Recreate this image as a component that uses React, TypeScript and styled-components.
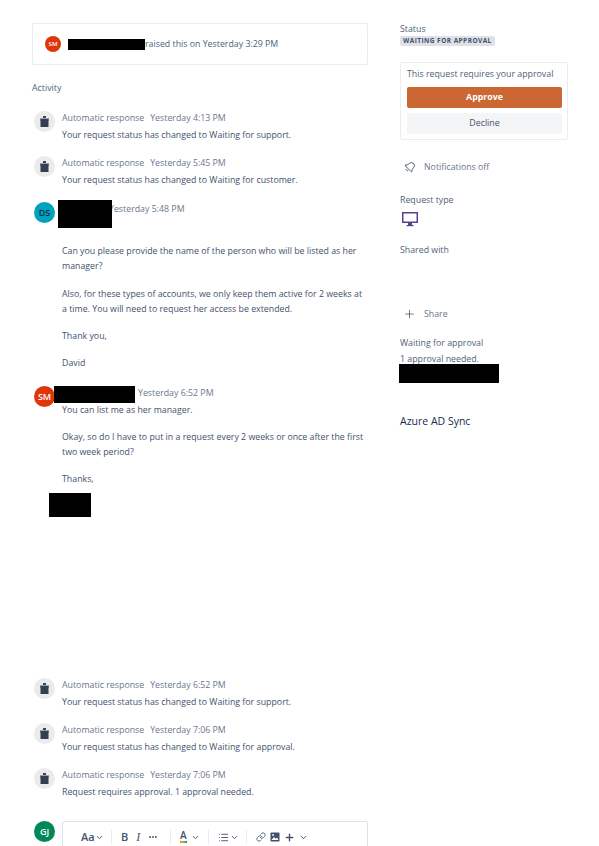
import { ReactNode } from "react";
import styled, { createGlobalStyle } from "styled-components";
import { Bell, ChevronDown, Ellipsis, Link, List, Plus } from "lucide-react";

const GlobalStyle = createGlobalStyle`
  html, body {
    margin: 0;
    padding: 0;
    height: 846px;
    overflow: hidden;
    background: #fff;
    font-family: "Open Sans", "Noto Sans", sans-serif;
    font-size: 8.8px;
    color: #42526e;
  }
`;

const Page = styled.div`
  display: grid;
  grid-template-columns: 336px 168px;
  column-gap: 32px;
  padding: 23px 0 0 32px;
  height: 823px;
  overflow: hidden;
`;

const Main = styled.main`
  display: flex;
  flex-direction: column;
`;

const RaisedCard = styled.div`
  position: relative;
  box-sizing: border-box;
  height: 42px;
  display: flex;
  align-items: center;
  border: 1px solid #ebecf0;
  border-radius: 2px;
  padding-left: 12px;
`;

const RaisedText = styled.span`
  margin-left: 84px;
  line-height: 12px;
  color: #505f79;
`;

const Redaction = styled.div<{ $x: number; $y: number; $w: number; $h: number }>`
  position: absolute;
  left: ${(p) => p.$x}px;
  top: ${(p) => p.$y}px;
  width: ${(p) => p.$w}px;
  height: ${(p) => p.$h}px;
  background: #000;
`;

const Avatar = styled.div<{ $size?: number; $bg: string; $fg?: string }>`
  flex: none;
  width: ${(p) => p.$size ?? 21}px;
  height: ${(p) => p.$size ?? 21}px;
  border-radius: 50%;
  background: ${(p) => p.$bg};
  color: ${(p) => p.$fg ?? "#fff"};
  display: flex;
  align-items: center;
  justify-content: center;
  font-size: ${(p) => ((p.$size ?? 21) < 20 ? 6 : 9)}px;
  font-weight: 600;
`;

const ActivityTitle = styled.h2`
  margin: 17px 0 0;
  font-size: 8.8px;
  line-height: 12px;
  font-weight: 400;
  color: #505f79;
`;

const Entry = styled.div<{ $top: number; $bottom?: number }>`
  position: relative;
  display: flex;
  gap: 7px;
  margin-top: ${(p) => p.$top}px;
  padding-left: 2px;
  padding-bottom: ${(p) => p.$bottom ?? 0}px;
`;

const EntryBody = styled.div`
  flex: 1;
  min-width: 0;
`;

const EntryHead = styled.div<{ $after?: number }>`
  display: flex;
  gap: 6px;
  line-height: 15px;
  color: #6b778c;
  margin-bottom: ${(p) => p.$after ?? 2}px;
`;

const DateText = styled.span<{ $indent?: number }>`
  margin-left: ${(p) => p.$indent ?? 0}px;
`;

const Paragraph = styled.p<{ $after?: number }>`
  margin: 0 0 ${(p) => p.$after ?? 12}px;
  line-height: 15px;
  color: #42526e;
`;

const Composer = styled.div`
  display: flex;
  gap: 7px;
  margin-top: 21px;
  padding-left: 2px;
`;

const EditorBox = styled.div`
  flex: 1;
  height: 60px;
  box-sizing: border-box;
  border: 1px solid #dfe1e6;
  border-radius: 2px;
`;

const Toolbar = styled.div`
  display: flex;
  align-items: center;
  height: 30px;
  padding-left: 18px;
  color: #42526e;
`;

const ToolGroup = styled.div<{ $width: number; $gap?: number }>`
  box-sizing: border-box;
  width: ${(p) => p.$width}px;
  display: flex;
  align-items: center;
  gap: ${(p) => p.$gap ?? 5}px;
  padding-left: 9px;
  height: 14px;
  border-left: 1px solid #ebecf0;
  &:first-child {
    border-left: 0;
    padding-left: 0;
  }
`;

const ToolGlyph = styled.span<{ $italic?: boolean }>`
  font-family: ${(p) => (p.$italic ? '"Liberation Serif", serif' : '"Open Sans", sans-serif')};
  font-size: ${(p) => (p.$italic ? 12 : 11)}px;
  font-weight: ${(p) => (p.$italic ? 400 : 600)};
  font-style: ${(p) => (p.$italic ? "italic" : "normal")};
  line-height: 12px;
`;

const ColorA = styled.span`
  display: inline-block;
  font-size: 10px;
  font-weight: 600;
  line-height: 9px;
  padding-bottom: 1px;
  border-bottom: 2px solid;
  border-image: linear-gradient(90deg, #de350b, #ffab00, #36b37e, #0052cc) 1;
`;

const Sidebar = styled.aside`
  display: flex;
  flex-direction: column;
`;

const SideLabel = styled.div<{ $top?: number }>`
  margin-top: ${(p) => p.$top ?? 0}px;
  line-height: 12px;
  color: #505f79;
`;

const Lozenge = styled.span`
  align-self: flex-start;
  margin-top: 1px;
  height: 10px;
  padding: 0 3px;
  border-radius: 2px;
  background: #dfe1e6;
  color: #42526e;
  font-size: 6.5px;
  font-weight: 700;
  letter-spacing: 0.45px;
  line-height: 10px;
`;

const ApprovalBox = styled.div`
  box-sizing: border-box;
  height: 78px;
  margin-top: 16px;
  padding: 6px 5px 0 6px;
  border: 1px solid #ebecf0;
  border-radius: 2px;
  display: flex;
  flex-direction: column;
`;

const ApprovalText = styled.div`
  line-height: 11px;
  color: #505f79;
  margin-bottom: 7px;
`;

const ActionButton = styled.button<{ $primary?: boolean }>`
  height: ${(p) => (p.$primary ? 21 : 22)}px;
  margin-bottom: 5px;
  border: 0;
  border-radius: 2px;
  padding: 0;
  font-family: inherit;
  font-size: 8.8px;
  font-weight: ${(p) => (p.$primary ? 700 : 400)};
  background: ${(p) => (p.$primary ? "#cc6633" : "#f4f5f7")};
  color: ${(p) => (p.$primary ? "#fff" : "#42526e")};
`;

const SideAction = styled.div<{ $top: number }>`
  display: flex;
  align-items: center;
  gap: 8px;
  height: 14px;
  margin-top: ${(p) => p.$top}px;
  padding-left: 3px;
  color: #6b778c;
`;

const ActionIcon = styled.span`
  flex: none;
  width: 13px;
  height: 14px;
  display: flex;
  align-items: center;
  justify-content: center;
  color: #42526e;
`;

const TiltedBell = styled(Bell)`
  transform: rotate(45deg);
`;

const MonitorWrap = styled.div`
  margin-top: 6px;
  height: 15px;
  padding-left: 2px;
  color: #5e3f8f;
`;

const ApproverBlock = styled.div`
  position: relative;
  height: 35px;
  margin-top: 14px;
`;

const ApprovalLine = styled.div`
  line-height: 16px;
  color: #505f79;
`;

const SyncName = styled.div`
  margin-top: 44px;
  font-size: 10.5px;
  line-height: 14px;
  color: #172b4d;
`;

function BotIcon() {
  return (
    <Avatar $bg="#ebebeb">
      <svg width="11" height="13" viewBox="0 0 11 13" aria-hidden="true">
        <rect x="4" y="1" width="3" height="2" fill="#344563" />
        <rect x="1" y="3" width="9" height="3" fill="#97a0af" />
        <rect x="1.5" y="4" width="8" height="8" fill="#344050" />
      </svg>
    </Avatar>
  );
}

function ImageIcon() {
  return (
    <svg width="10" height="10" viewBox="0 0 10 10" aria-hidden="true">
      <rect x="0.5" y="0.5" width="9" height="9" rx="0.8" fill="currentColor" />
      <path d="M1.5 8 4 5l1.6 1.8L7 5.6 8.5 8z" fill="#fff" />
      <circle cx="3" cy="3" r="0.9" fill="#fff" />
    </svg>
  );
}

function AutoEntry({ top, time, children }: { top: number; time: string; children: ReactNode }) {
  return (
    <Entry $top={top}>
      <BotIcon />
      <EntryBody>
        <EntryHead>
          <span>Automatic response</span>
          <DateText>{time}</DateText>
        </EntryHead>
        <Paragraph $after={0}>{children}</Paragraph>
      </EntryBody>
    </Entry>
  );
}

export default function App() {
  return (
    <>
      <GlobalStyle />
      <Page>
        <Main>
          <RaisedCard>
            <Avatar $size={16} $bg="#de350b">SM</Avatar>
            <RaisedText>raised this on Yesterday 3:29 PM</RaisedText>
            <Redaction $x={35} $y={15} $w={77} $h={11} />
          </RaisedCard>
          <ActivityTitle>Activity</ActivityTitle>

          <AutoEntry top={17} time="Yesterday 4:13 PM">
            Your request status has changed to Waiting for support.
          </AutoEntry>
          <AutoEntry top={13} time="Yesterday 5:45 PM">
            Your request status has changed to Waiting for customer.
          </AutoEntry>

          <Entry $top={14}>
            <Avatar $bg="#00a3bf" $fg="#172b4d">DS</Avatar>
            <EntryBody>
              <EntryHead $after={27}>
                <DateText $indent={47}>Yesterday 5:48 PM</DateText>
              </EntryHead>
              <Paragraph $after={13}>
                Can you please provide the name of the person who will be listed as her manager?
              </Paragraph>
              <Paragraph>
                Also, for these types of accounts, we only keep them active for 2 weeks at a time. You
                will need to request her access be extended.
              </Paragraph>
              <Paragraph>Thank you,</Paragraph>
              <Paragraph $after={0}>David</Paragraph>
            </EntryBody>
            <Redaction $x={26} $y={-2} $w={54} $h={28} />
          </Entry>

          <Entry $top={15} $bottom={177}>
            <Avatar $bg="#de350b">SM</Avatar>
            <EntryBody>
              <EntryHead>
                <DateText $indent={76}>Yesterday 6:52 PM</DateText>
              </EntryHead>
              <Paragraph>You can list me as her manager.</Paragraph>
              <Paragraph>
                Okay, so do I have to put in a request every 2 weeks or once after the first two week
                period?
              </Paragraph>
              <Paragraph $after={0}>Thanks,</Paragraph>
            </EntryBody>
            <Redaction $x={22} $y={0} $w={81} $h={17} />
            <Redaction $x={17} $y={107} $w={42} $h={24} />
          </Entry>

          <AutoEntry top={14} time="Yesterday 6:52 PM">
            Your request status has changed to Waiting for support.
          </AutoEntry>
          <AutoEntry top={13} time="Yesterday 7:06 PM">
            Your request status has changed to Waiting for approval.
          </AutoEntry>
          <AutoEntry top={13} time="Yesterday 7:06 PM">
            Request requires approval. 1 approval needed.
          </AutoEntry>

          <Composer>
            <Avatar $bg="#00875a">GJ</Avatar>
            <EditorBox>
              <Toolbar>
                <ToolGroup $width={30} $gap={0}>
                  <ToolGlyph>Aa</ToolGlyph>
                  <ChevronDown size={9} strokeWidth={2.5} />
                </ToolGroup>
                <ToolGroup $width={59} $gap={8}>
                  <ToolGlyph>B</ToolGlyph>
                  <ToolGlyph $italic>I</ToolGlyph>
                  <Ellipsis size={10} strokeWidth={2.5} />
                </ToolGroup>
                <ToolGroup $width={38} $gap={4}>
                  <ColorA>A</ColorA>
                  <ChevronDown size={9} strokeWidth={2.5} />
                </ToolGroup>
                <ToolGroup $width={38} $gap={1}>
                  <List size={11} strokeWidth={2} />
                  <ChevronDown size={9} strokeWidth={2.5} />
                </ToolGroup>
                <ToolGroup $width={70} $gap={4}>
                  <Link size={10} strokeWidth={2} />
                  <ImageIcon />
                  <Plus size={11} strokeWidth={3} />
                  <ChevronDown size={9} strokeWidth={2.5} />
                </ToolGroup>
              </Toolbar>
            </EditorBox>
          </Composer>
        </Main>

        <Sidebar>
          <SideLabel>Status</SideLabel>
          <Lozenge>WAITING FOR APPROVAL</Lozenge>
          <ApprovalBox>
            <ApprovalText>This request requires your approval</ApprovalText>
            <ActionButton $primary>Approve</ActionButton>
            <ActionButton>Decline</ActionButton>
          </ApprovalBox>
          <SideAction $top={20}>
            <ActionIcon>
              <TiltedBell size={12} strokeWidth={1.8} />
            </ActionIcon>
            Notifications off
          </SideAction>
          <SideLabel $top={20}>Request type</SideLabel>
          <MonitorWrap>
            <svg width="16" height="15" viewBox="0 0 16 15" aria-hidden="true">
              <rect x="0.75" y="0.75" width="14.5" height="9.5" fill="none" stroke="currentColor" strokeWidth="1.5" />
              <rect x="6" y="11" width="4" height="2" fill="currentColor" />
              <rect x="4.5" y="13" width="7" height="1.2" fill="currentColor" />
            </svg>
          </MonitorWrap>
          <SideLabel $top={17}>Shared with</SideLabel>
          <SideAction $top={51}>
            <ActionIcon>
              <Plus size={20} strokeWidth={1.4} />
            </ActionIcon>
            Share
          </SideAction>
          <ApproverBlock>
            <ApprovalLine>Waiting for approval</ApprovalLine>
            <ApprovalLine>1 approval needed.</ApprovalLine>
            <Redaction $x={-1} $y={29} $w={100} $h={19} />
          </ApproverBlock>
          <SyncName>Azure AD Sync</SyncName>
        </Sidebar>
      </Page>
    </>
  );
}
